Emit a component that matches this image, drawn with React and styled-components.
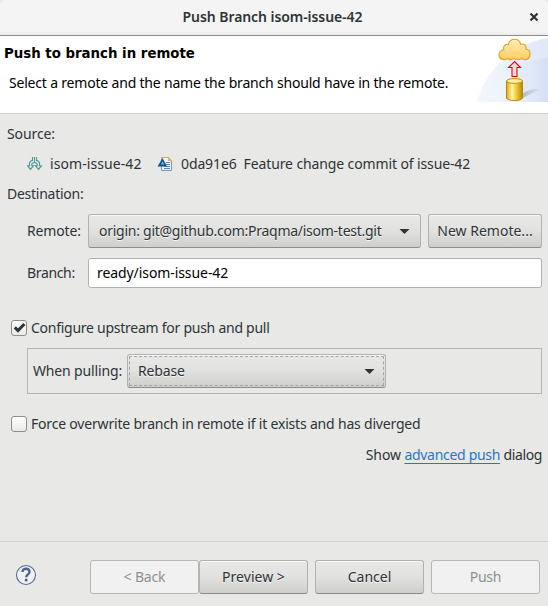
import React from "react";
import styled, { createGlobalStyle, css } from "styled-components";

const Global = createGlobalStyle`
  * { box-sizing: border-box; }
  body { margin: 0; background: #e8e8e6; }
`;

const Dialog = styled.div`
  width: 548px;
  height: 606px;
  display: flex;
  flex-direction: column;
  overflow: hidden;
  background: #e8e8e6;
  color: #2e3436;
  font: 14px/20px "Noto Sans", "Open Sans", sans-serif;
  white-space: pre;
`;

const Label = styled.span`
  letter-spacing: ${(p) => p.$ls ?? -0.26}px;
  ${(p) => p.$w && css`width: ${p.$w}px; flex: none;`}
`;

const TitleBar = styled.header`
  flex: none;
  height: 36px;
  display: grid;
  grid-template-columns: 25px 1fr 28px;
  align-items: center;
  text-align: center;
  padding-bottom: 2px;
  background: linear-gradient(#f4f4f4 32px, #e9e9e9 35px);
  border-bottom: 1px solid #8b8d8b;
  border-radius: 5px 5px 0 0;
  font-weight: 600;
`;

const CloseButton = styled.button`
  border: 0;
  padding: 0;
  background: none;
  width: 28px;
  height: 20px;
  display: flex;
  align-items: center;
  justify-content: center;
`;

const Banner = styled.section`
  flex: none;
  height: 78px;
  display: flex;
  justify-content: space-between;
  background: #fff;
  color: #000;
  border-bottom: 1px solid #cfcfcd;
`;

const BannerText = styled.div`
  padding: 8px 0 0 4px;
`;

const BannerTitle = styled.h1`
  margin: 0;
  font: bold 13.33px/20px "DejaVu Sans", sans-serif;
`;

const BannerMessage = styled.p`
  margin: 9px 0 0 5px;
`;

const Body = styled.main`
  flex: 1;
  padding: 10px 6px 0 7px;
`;

const Row = styled.div`
  display: flex;
  align-items: center;
  height: ${(p) => p.$h}px;
  margin-top: ${(p) => p.$mt ?? 0}px;
  padding-left: ${(p) => p.$indent ?? 0}px;
  ${(p) => p.$end && "justify-content: flex-end;"}
`;

const SourceIcon = styled.svg`
  flex: none;
  margin: 0 ${(p) => p.$gap ?? 7}px 0 0;
`;

const raised = css`
  border: 1px solid #b0b2af;
  border-bottom-color: #8b8d8a;
  border-radius: 3px;
  background: linear-gradient(#e8e8e6, #e2e2e0 45%, #cfcfcc);
  box-shadow: inset 0 1px #fafafa;
  color: #2e3436;
  text-shadow: 0 1px rgba(255, 255, 255, 0.75);
`;

const Button = styled.button`
  ${raised}
  width: ${(p) => p.$w}px;
  height: 34px;
  flex: none;
  padding: 0;
  margin-left: ${(p) => p.$gap ?? 7}px;
  font: inherit;
  &:disabled {
    background: #f1f1f1;
    border-color: #b6b8b5;
    box-shadow: none;
    color: #8d9091;
    text-shadow: none;
  }
`;

const Select = styled.div`
  ${raised}
  width: ${(p) => p.$w}px;
  height: 34px;
  flex: none;
  display: flex;
  align-items: center;
  justify-content: space-between;
  padding: 0 10px;
  ${(p) => p.$focused && css`
    outline: 1px dashed #a2a4a1;
    outline-offset: -3px;
  `}
`;

const Input = styled.input`
  width: 454px;
  height: 30px;
  border: 1px solid #b0b2af;
  border-radius: 3px;
  padding: 0 8px 2px;
  background: #fff;
  color: #000;
  font: inherit;
  letter-spacing: -0.08px;
  outline: none;
`;

const CheckBox = styled.span`
  width: 16px;
  height: 16px;
  margin-right: 4px;
  border: 1px solid #8e908d;
  border-radius: 3px;
  background: linear-gradient(#fff, #e9e9e7);
  display: flex;
`;

const Group = styled.fieldset`
  display: flex;
  align-items: center;
  height: 46px;
  margin: 10px 0 0 20px;
  padding: 0 0 0 5px;
  border: 1px solid #b4b6b3;
`;

const Link = styled.a`
  color: #2a76c6;
  letter-spacing: -0.3px;
  text-decoration: underline;
  text-underline-offset: 3px;
  text-decoration-skip-ink: none;
`;

const Footer = styled.footer`
  flex: none;
  height: 65px;
  display: flex;
  align-items: flex-start;
  padding: 18px 8px 0 15px;
  border-top: 1px solid #cfd0cd;
`;

const Help = styled.svg`
  margin: 4px 53px 0 0;
  flex: none;
`;

const Arrow = () => (
  <svg width="11" height="7" viewBox="0 0 11 7">
    <path d="M.5 1h10L5.5 6z" fill="#2e3436" />
  </svg>
);

const Check = () => (
  <svg width="14" height="14" viewBox="0 0 14 14">
    <path d="M2.8 6.4 6 9.6 12.4 3" fill="none" stroke="#2e3436" strokeWidth="3" />
  </svg>
);

const BannerArt = () => (
  <svg width="72" height="66" viewBox="0 0 72 66">
    <defs>
      <linearGradient id="sky"><stop stopColor="#fff" stopOpacity=".2" /><stop offset="1" stopColor="#ccd9f2" /></linearGradient>
      <linearGradient id="sky2"><stop stopColor="#f4f7fd" /><stop offset="1" stopColor="#dfe8f7" /></linearGradient>
      <linearGradient id="cloud" x2="0" y2="1"><stop stopColor="#fff0bd" /><stop offset="1" stopColor="#fdcd62" /></linearGradient>
      <linearGradient id="can"><stop stopColor="#dca717" /><stop offset=".35" stopColor="#fff5a5" /><stop offset=".6" stopColor="#efcf37" /><stop offset="1" stopColor="#bd850a" /></linearGradient>
      <linearGradient id="shade"><stop stopColor="#b4bccb" /><stop offset="1" stopColor="#c5cddd" stopOpacity=".4" /></linearGradient>
    </defs>
    <path d="M1 66C7 40 31 9 72 2v64z" fill="url(#sky2)" />
    <path d="M14 66C20 40 40 25 72 22v44z" fill="url(#sky)" opacity=".6" />
    <path d="M47 62l17-9c-5-.5-12 .5-17 4z" fill="url(#shade)" />
    <path d="M28.5 23.6C21.2 23.6 21.4 14.3 27.8 13.8c-1.2-4 2-6.2 4.5-5.2C34 1.4 43.2 1.6 44.7 8.3c3.5-1.2 6.2 1.5 5.2 4.7 5.8.2 5.6 10.6-1.2 10.6q-1.7 0-3-1-1.7 1-4 1-2 0-3.5-1-1.5 1-3.5 1-2 0-3.2-1-1.3 1-3 1z" fill="url(#cloud)" stroke="#dfa52b" strokeWidth="1.2" />
    <path d="M38.5 25.5l6 6h-3.5v9h-5v-9h-3.5z" fill="#f6d8d8" stroke="#d20f13" strokeWidth="1.1" />
    <path d="M30.5 45v17c1 3.4 15 3.4 16 0V45" fill="url(#can)" stroke="#b98611" />
    <ellipse cx="38.5" cy="45" rx="8" ry="2.4" fill="#fff09b" stroke="#c08b12" />
  </svg>
);

const BranchIcon = () => (
  <SourceIcon width="16" height="16" viewBox="0 0 16 16">
    <path d="M5.5 1v3.5h-1l-2 2v3.2H.5L3.4 13.4 6.6 9.7H4.8V8L6.2 6.7h2.6L10.2 8v1.7H8.4l3.2 3.7 2.9-3.7h-2V6.5l-2-2h-1V1" fill="#cfeaea" stroke="#5a9496" strokeWidth="1.1" />
    <path d="M7.5 1v6" stroke="#5a9496" />
  </SourceIcon>
);

const CommitIcon = () => (
  <SourceIcon $gap={8} width="16" height="16" viewBox="0 0 16 16">
    <path d="M4.5 1.5h7l3 3v10h-10z" fill="#edf3fb" stroke="#8092b6" />
    <path d="M4.5 5V1.5h7" fill="none" stroke="#c7ad6d" />
    <path d="M11 1l4 4h-4z" fill="#e7bd56" />
    <path d="M9 6.5h4M9 8.5h4M7 10.5h6M7 12.5h6" stroke="#6584ba" />
    <path d="M.5 10.5h9.5L5.5 2z" fill="#0e5799" />
    <path d="M4 8.5h3L5.5 5.5z" fill="#8fc5eb" />
  </SourceIcon>
);

export default function App() {
  return (
    <Dialog>
      <Global />
      <TitleBar>
        <span />
        <Label $ls={-0.07}>Push Branch isom-issue-42</Label>
        <CloseButton aria-label="Close">
          <svg width="10" height="10" viewBox="0 0 10 10"><path d="M1.5 1.5l7 7m0-7l-7 7" stroke="#2e3436" strokeWidth="2.2" /></svg>
        </CloseButton>
      </TitleBar>
      <Banner>
        <BannerText>
          <BannerTitle>Push to branch in remote</BannerTitle>
          <BannerMessage><Label $ls={-0.19}>Select a remote and the name the branch should have in the remote.</Label></BannerMessage>
        </BannerText>
        <BannerArt />
      </Banner>
      <Body>
        <Row $h={20}><Label $ls={-0.1}>Source:</Label></Row>
        <Row $h={20} $mt={10} $indent={20}>
          <BranchIcon />
          <Label $w={107} $ls={0.08}>isom-issue-42</Label>
          <CommitIcon />
          <Label $ls={-0.12}>0da91e6  Feature change commit of issue-42</Label>
        </Row>
        <Row $h={20} $mt={10}><Label>Destination:</Label></Row>
        <Row $h={34} $mt={10} $indent={20}>
          <Label $w={61} $ls={-0.15}>Remote:</Label>
          <Select $w={333}><Label>origin: git@github.com:Praqma/isom-test.git</Label><Arrow /></Select>
          <Button $w={114}><Label $ls={0}>New Remote...</Label></Button>
        </Row>
        <Row $h={30} $mt={10} $indent={20}>
          <Label $w={61} $ls={-0.35}>Branch:</Label>
          <Input defaultValue="ready/isom-issue-42" />
        </Row>
        <Row $h={20} $mt={30} $indent={4}>
          <CheckBox><Check /></CheckBox>
          <Label>Configure upstream for push and pull</Label>
        </Row>
        <Group>
          <Label $w={94} $ls={-0.15}>When pulling:</Label>
          <Select $w={259} $focused><Label $ls={-0.15}>Rebase</Label><Arrow /></Select>
        </Group>
        <Row $h={20} $mt={20} $indent={4}>
          <CheckBox />
          <Label $ls={-0.19}>Force overwrite branch in remote if it exists and has diverged</Label>
        </Row>
        <Row $h={20} $mt={11} $end>
          <Label $ls={-0.1}>Show </Label><Link>advanced push</Link><Label $ls={-0.36}> dialog</Label>
        </Row>
      </Body>
      <Footer>
        <Help width="22" height="22" viewBox="0 0 22 22">
          <circle cx="11" cy="11" r="9.5" fill="#f0f1f3" stroke="#566b91" strokeWidth="1.1" />
          <path d="M7.5 8c0-4.4 7-4.2 7 0 0 2.5-3.3 2.4-3.3 5.3" fill="none" stroke="#4b638d" strokeWidth="2.4" />
          <circle cx="11.1" cy="16" r="1.5" fill="#4b638d" />
        </Help>
        <Button $w={109} $gap={0} disabled><Label $ls={-0.15}>&lt; Back</Label></Button>
        <Button $w={109} $gap={0}><Label $ls={0.02}>Preview &gt;</Label></Button>
        <Button $w={109}><Label $ls={0}>Cancel</Label></Button>
        <Button $w={109} disabled><Label>Push</Label></Button>
      </Footer>
    </Dialog>
  );
}
